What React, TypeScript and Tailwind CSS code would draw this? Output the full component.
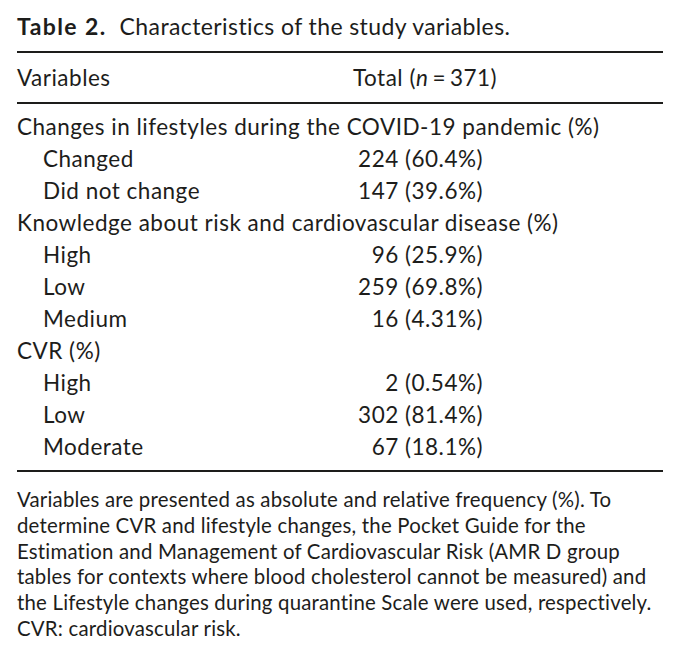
const rows: { label: string; value?: string; indent?: boolean }[] = [
  { label: "Changes in lifestyles during the COVID-19 pandemic (%)" },
  { label: "Changed", value: "224 (60.4%)", indent: true },
  { label: "Did not change", value: "147 (39.6%)", indent: true },
  { label: "Knowledge about risk and cardiovascular disease (%)" },
  { label: "High", value: "96 (25.9%)", indent: true },
  { label: "Low", value: "259 (69.8%)", indent: true },
  { label: "Medium", value: "16 (4.31%)", indent: true },
  { label: "CVR (%)" },
  { label: "High", value: "2 (0.54%)", indent: true },
  { label: "Low", value: "302 (81.4%)", indent: true },
  { label: "Moderate", value: "67 (18.1%)", indent: true },
];

const notes = [
  "Variables are presented as absolute and relative frequency (%). To",
  "determine CVR and lifestyle changes, the Pocket Guide for the",
  "Estimation and Management of Cardiovascular Risk (AMR D group",
  "tables for contexts where blood cholesterol cannot be measured) and",
  "the Lifestyle changes during quarantine Scale were used, respectively.",
  "CVR: cardiovascular risk.",
];

const App = () => {
  return (
    <div className="min-h-[656px] w-[680px] bg-white px-[17px] font-['Lato',sans-serif] text-[#1d1d1b]">
      <div className="border-b-2 border-[#1d1d1b] pt-[10px] pb-[9px] text-[23px] leading-[32px] whitespace-nowrap">
        <span className="font-bold tracking-[1.4px]">Table 2.</span>
        <span className="ml-[13px] tracking-[0.4px]">Characteristics of the study variables.</span>
      </div>

      <div className="flex border-b-2 border-[#1d1d1b] py-[8.5px] text-[22.5px] leading-[32px] tracking-[0.5px]">
        <div className="w-[336px]">Variables</div>
        <div>
          Total (<span className="italic">n</span>
          <span className="mx-[4px]">=</span>371)
        </div>
      </div>

      <div className="border-b-2 border-[#1d1d1b] pt-[6.5px] pb-[7.5px] text-[22.5px] leading-[32px] tracking-[0.5px]">
        {rows.map((row, i) => (
          <div key={i} className="flex">
            <div className={row.indent ? "w-[336px] pl-[26px]" : "whitespace-nowrap"}>{row.label}</div>
            {row.value && <div className="w-[130px] text-right">{row.value}</div>}
          </div>
        ))}
      </div>

      <div className="mt-[15px] text-[20.4px] leading-[25.8px] tracking-[0.2px] whitespace-nowrap">
        {notes.map((line, i) => (
          <p key={i}>{line}</p>
        ))}
      </div>
    </div>
  );
};

export default App;
